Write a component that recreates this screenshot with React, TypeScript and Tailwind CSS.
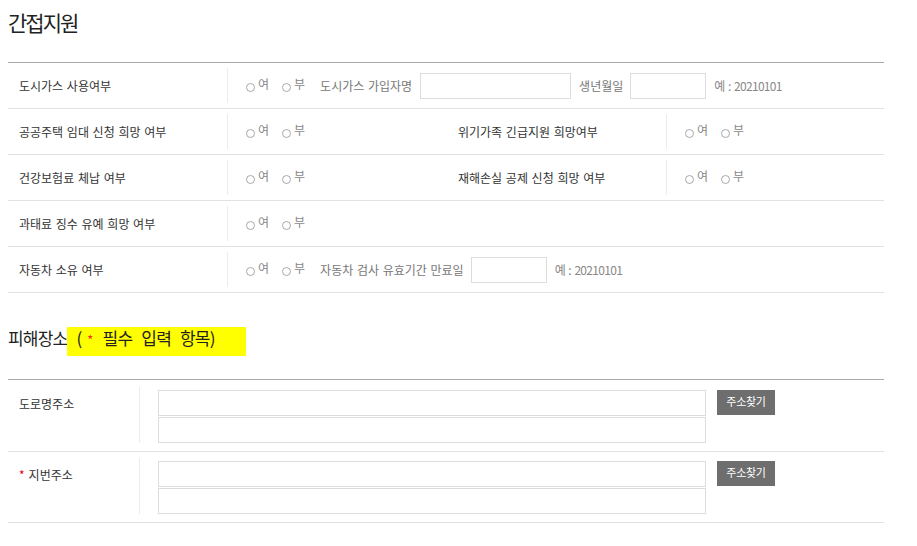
import React from "react";

const font = "font-['Noto_Sans_CJK_KR',sans-serif]";

function YesNo() {
  return (
    <div className="flex items-center text-[#888]">
      <span className="mt-[3px] box-border inline-block h-[9px] w-[9px] rounded-full border border-[#a8a8a8]" />
      <span className="-mt-[4px] ml-[3px]">여</span>
      <span className="ml-[13px] mt-[3px] box-border inline-block h-[9px] w-[9px] rounded-full border border-[#a8a8a8]" />
      <span className="-mt-[4px] ml-[3px]">부</span>
    </div>
  );
}

function Label({ children }: { children: React.ReactNode }) {
  return (
    <div className="flex h-[35px] w-[220px] shrink-0 items-center border-r border-[#ececec] pl-[11px] text-[#333]">
      {children}
    </div>
  );
}

function Row({ children }: { children: React.ReactNode }) {
  return <div className="flex h-[46px] items-center border-b border-[#e2e2e2]">{children}</div>;
}

function TextBox({ w }: { w: string }) {
  return <input className={`box-border h-[26px] border border-[#dcdcdc] bg-white outline-none ${w}`} />;
}

function Example() {
  return (
    <span className="ml-[8px] whitespace-pre text-[#888] [word-spacing:0px]">
      예 : <span className="tracking-[-0.7px]">20210101</span>
    </span>
  );
}

function AddrRow({ label, required, pt }: { label: string; required?: boolean; pt: string }) {
  return (
    <div className={`flex border-b border-[#e2e2e2] pb-[8px] ${pt}`}>
      <div className="w-[132px] shrink-0 border-r border-[#ececec] pl-[11px] pt-[8px] leading-[17px] text-[#333]">
        {required && <span className="mr-[4px] text-[#e60012]">*</span>}
        {label}
      </div>
      <div className="flex items-start pl-[18px] pt-[3px]">
        <div className="flex flex-col gap-[1px]">
          <TextBox w="w-[548px]" />
          <TextBox w="w-[548px]" />
        </div>
        <button className="ml-[11px] flex h-[25px] w-[58px] items-start justify-center bg-[#6e6e6e] pt-[3px] text-[11px] leading-[16px] tracking-[-0.3px] text-white">
          주소찾기
        </button>
      </div>
    </div>
  );
}

export default function App() {
  return (
    <div className={`${font} min-h-[546px] w-[917px] bg-white text-[12px] [word-spacing:1px]`}>
      <div className="ml-[8px] w-[876px]">
        <div className="mt-[8px] text-[21px] leading-[28px] tracking-[-2px] text-[#222]">간접지원</div>
        <div className="mt-[26px] border-t border-[#a9a9a9]">
          <Row>
            <Label>도시가스 사용여부</Label>
            <div className="flex items-center pl-[18px] text-[#777]">
              <YesNo />
              <span className="ml-[15px]">도시가스 가입자명</span>
              <div className="ml-[8px]">
                <TextBox w="w-[151px]" />
              </div>
              <span className="ml-[8px]">생년월일</span>
              <div className="ml-[7px]">
                <TextBox w="w-[76px]" />
              </div>
              <Example />
            </div>
          </Row>
          <Row>
            <Label>공공주택 임대 신청 희망 여부</Label>
            <div className="flex w-[219px] items-center pl-[18px]">
              <YesNo />
            </div>
            <Label>위기가족 긴급지원 희망여부</Label>
            <div className="flex items-center pl-[18px]">
              <YesNo />
            </div>
          </Row>
          <Row>
            <Label>건강보험료 체납 여부</Label>
            <div className="flex w-[219px] items-center pl-[18px]">
              <YesNo />
            </div>
            <Label>재해손실 공제 신청 희망 여부</Label>
            <div className="flex items-center pl-[18px]">
              <YesNo />
            </div>
          </Row>
          <Row>
            <Label>과태료 징수 유예 희망 여부</Label>
            <div className="flex items-center pl-[18px]">
              <YesNo />
            </div>
          </Row>
          <Row>
            <Label>자동차 소유 여부</Label>
            <div className="flex items-center pl-[18px] text-[#777]">
              <YesNo />
              <span className="ml-[15px]">자동차 검사 유효기간 만료일</span>
              <div className="ml-[7px]">
                <TextBox w="w-[76px]" />
              </div>
              <Example />
            </div>
          </Row>
        </div>

        <div className="mt-[34px] flex h-[29px] items-start text-[17px] leading-[22px] tracking-[-0.8px] text-[#222] [word-spacing:6px]">
          <span>피해장소</span>
          <span className="inline-block h-[29px] bg-[#ffff00] pl-[9px] pr-[31px]">
            (<span className="ml-[6px] mr-[1px] text-[13px] leading-none text-[#e8341c]">*</span> 필수 입력 항목)
          </span>
        </div>

        <div className="mt-[23px] border-t border-[#a9a9a9]">
          <AddrRow label="도로명주소" pt="pt-[7px]" />
          <AddrRow label="지번주소" required pt="pt-[6px]" />
        </div>
      </div>
    </div>
  );
}
